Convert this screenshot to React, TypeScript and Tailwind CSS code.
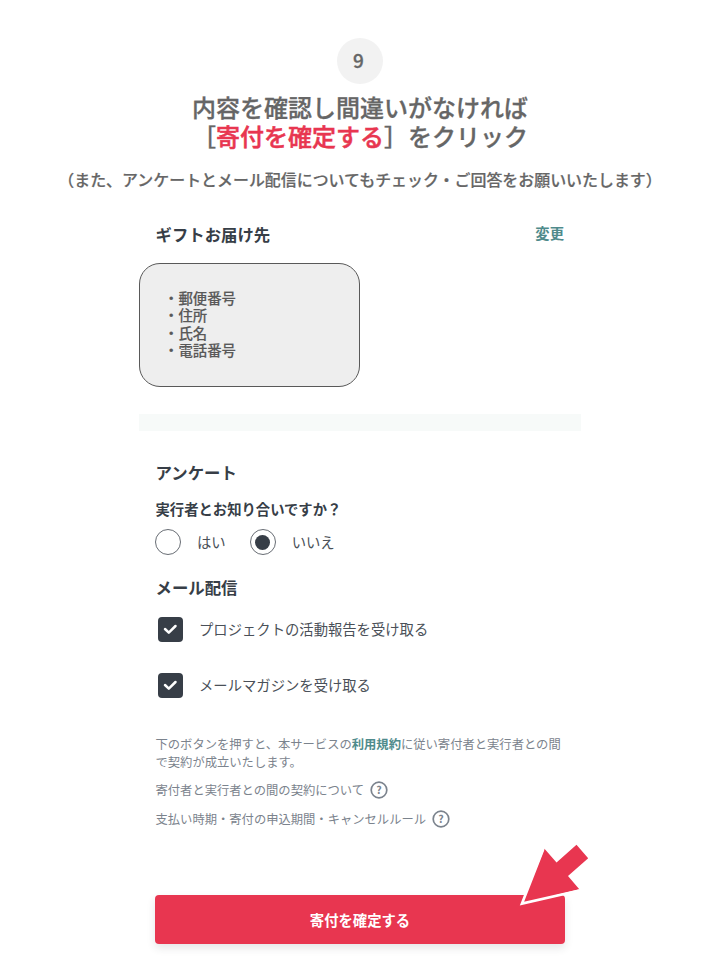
import React from 'react';

function Checkbox({ label }: { label: string }) {
  return (
    <label className="flex h-[26px] items-center">
      <span className="ml-[2.5px] flex h-[25px] w-[25px] items-center justify-center rounded-[4px] bg-[#373e47]">
        <svg width="25" height="25" viewBox="0 0 25 25" fill="none">
          <path d="M7 12 L10.8 15.6 L17.5 9" stroke="#fff" strokeWidth="2.5" strokeLinecap="round" strokeLinejoin="round" />
        </svg>
      </span>
      <span className="ml-[16.5px] text-[14.33px] leading-5 text-[#4a5058]">{label}</span>
    </label>
  );
}

function Radio({ label, checked = false }: { label: string; checked?: boolean }) {
  return (
    <label className="flex items-center">
      <span className="flex h-[26px] w-[26px] items-center justify-center rounded-full border border-[#686d74] bg-white">
        {checked && <span className="h-[15px] w-[15px] rounded-full bg-[#373e47]" />}
      </span>
      <span className="ml-4 text-[14.33px] leading-5 text-[#4a5058]">{label}</span>
    </label>
  );
}

function HelpLine({ text }: { text: string }) {
  return (
    <p className="flex h-[18px] items-center">
      {text}
      <svg className="ml-[5.5px]" width="18" height="18" viewBox="0 0 18 18" fill="none">
        <circle cx="9" cy="9" r="7.8" stroke="#7b838d" strokeWidth="1.7" />
        <text x="9" y="12.7" textAnchor="middle" fontSize="10.5" fontWeight="700" fill="#7b838d">?</text>
      </svg>
    </p>
  );
}

export default function App() {
  return (
    <main className="relative flex h-[960px] w-[720px] flex-col items-center overflow-hidden bg-white font-['Noto_Sans_CJK_JP',sans-serif] text-[#373e47]">
      <header className="flex w-full flex-col items-center text-[#666]">
        <div className="mt-[38px] flex h-[46px] w-[46px] items-center justify-center rounded-full bg-[#f2f2f2] pr-[3px] pb-[2px] text-[19px] font-medium [-webkit-text-stroke:0.3px]">9</div>
        <h1 className="mt-[8px] text-[24px] leading-[29px] font-medium whitespace-nowrap [-webkit-text-stroke:0.3px]">
          内容を確認し間違いがなければ<br />
          ［<span className="text-[#e83650] [-webkit-text-stroke:0.5px]">寄付を確定する</span>］をクリック
        </h1>
        <p className="mt-[17px] text-[15.95px] leading-6 font-medium whitespace-nowrap [-webkit-text-stroke:0.2px]">（また、アンケートとメール配信についてもチェック・ご回答をお願いいたします）</p>
      </header>

      <section className="mt-[31px] w-[442px]">
        <div className="flex h-6 items-start justify-between pr-[17px] pl-[16.5px]">
          <h2 className="text-[16.4px] leading-6 font-bold">ギフトお届け先</h2>
          <a className="pt-px text-[14.33px] leading-5 font-bold text-[#4f8b8c]">変更</a>
        </div>
        <div className="mt-[17px] h-[124px] w-[221px] rounded-[21px] border border-[#595959] bg-[#eee] pt-[25px] pl-[24px]">
          <ul className="text-[14.4px] leading-[17.3px] font-medium text-[#595959] [-webkit-text-stroke:0.15px]">
            <li>・郵便番号</li>
            <li>・住所</li>
            <li>・氏名</li>
            <li>・電話番号</li>
          </ul>
        </div>
      </section>

      <div className="mt-[27px] h-[17px] w-[442px] bg-[#f7faf9]" />

      <section className="mt-[29px] w-[410px]">
        <h2 className="pl-[0.5px] text-[16.4px] leading-6 font-bold">アンケート</h2>
        <h3 className="mt-[15px] pl-[0.5px] text-[14.33px] leading-5 font-bold">実行者とお知り合いですか？</h3>
        <div className="mt-[10px] flex gap-[24px]">
          <Radio label="はい" />
          <Radio label="いいえ" checked />
        </div>
        <h2 className="mt-[20px] pl-[0.5px] text-[16.4px] leading-6 font-bold">メール配信</h2>
        <div className="mt-[17px] flex flex-col gap-[30px]">
          <Checkbox label="プロジェクトの活動報告を受け取る" />
          <Checkbox label="メールマガジンを受け取る" />
        </div>
        <div className="mt-[37px] pl-[0.5px] text-[12.3px] leading-[18.4px] whitespace-nowrap text-[#7b838d]">
          <p>
            下のボタンを押すと、本サービスの<a className="font-bold text-[#4f8b8c]">利用規約</a>に従い寄付者と実行者との間<br />
            で契約が成立いたします。
          </p>
          <div className="mt-[9px] flex flex-col gap-[11px]">
            <HelpLine text="寄付者と実行者との間の契約について" />
            <HelpLine text="支払い時期・寄付の申込期間・キャンセルルール" />
          </div>
        </div>
        <button className="mt-[67px] flex h-[49px] w-[410px] items-center justify-center rounded-[4px] bg-[#e83650] text-[14.33px] font-bold text-white shadow-[0_4px_8px_rgba(40,50,60,0.12)]">寄付を確定する</button>
      </section>

      <svg className="absolute top-[835px] left-[510px]" width="90" height="80" viewBox="510 835 90 80">
        <path d="M522 903.5 L544.5 848.8 L556.5 862.5 L576.5 844.7 L588.2 858.3 L568 876 L579.3 889.3 Z" fill="#e83650" />
        <path d="M543.3 849 L522 903.5 L579.5 890.5" fill="none" stroke="#fff" strokeWidth="2.7" />
      </svg>
    </main>
  );
}
